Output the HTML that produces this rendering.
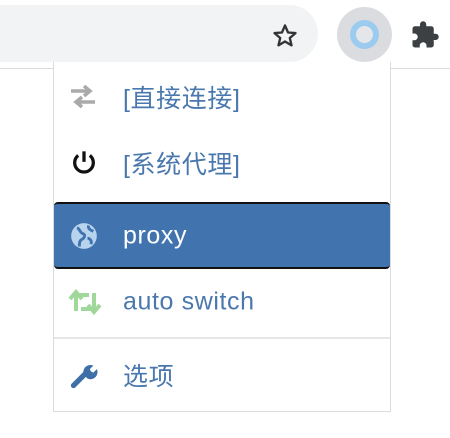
<!DOCTYPE html>
<html><head><meta charset="utf-8"><style>
body{margin:0;width:450px;height:438px;background:#fff;position:relative;overflow:hidden;font-family:"Liberation Sans","Noto Sans CJK SC",sans-serif}
.bar{position:absolute;left:-30px;top:5px;width:348px;height:57px;background:#f1f3f4;border-radius:29px}
.line{position:absolute;left:0;top:68px;width:450px;height:1px;background:#dadce0}
.ext{position:absolute;left:337px;top:7px;width:55px;height:55px;border-radius:50%;background:#dadce0}
.ring{position:absolute;left:350px;top:20px;width:17px;height:17px;border:6px solid #9ccbf0;border-radius:50%;background:#e4e6e9}
.pop{position:absolute;left:53px;top:62px;width:336px;height:349px;border:1px solid #dadce0;background:#fff;border-top:none}
.it{position:absolute;left:0;width:336px;height:66px;color:#4a78ae;font-size:25px;letter-spacing:0.6px}
.it span{position:absolute;left:69px;top:50%;transform:translateY(-50%)}
.ic{position:absolute;left:14px;top:50%;transform:translateY(-50%)}
.sel{background:#4174ae;color:#fff;border-top:2px solid #111;border-bottom:2px solid #111;border-radius:4px}
.sep{position:absolute;left:0;width:336px;height:2px;background:#e6e6e6}
</style></head><body>
<div class="bar"></div>
<div class="line"></div>
<svg style="position:absolute;left:271px;top:22px" width="28" height="28" viewBox="0 0 24 24"><path d="M12 3l2.6 6 6.4.5-4.9 4.2 1.5 6.3L12 16.7 6.4 20l1.5-6.3L3 9.5l6.4-.5z" fill="none" stroke="#333" stroke-width="2" stroke-linejoin="round"/></svg>
<div class="ext"></div><div class="ring"></div>
<svg style="position:absolute;left:410px;top:20px" width="30" height="30" viewBox="0 0 24 24"><path d="M20.5 11H19V7a2 2 0 0 0-2-2h-4V3.5a2.5 2.5 0 0 0-5 0V5H4a2 2 0 0 0-2 2v3.8h1.5a2.7 2.7 0 0 1 0 5.4H2V20a2 2 0 0 0 2 2h3.8v-1.5a2.7 2.7 0 0 1 5.4 0V22H17a2 2 0 0 0 2-2v-4h1.5a2.5 2.5 0 0 0 0-5z" fill="#3c4043"/></svg>
<div class="pop">
<div class="it" style="top:2px"><svg class="ic" width="30" height="24" viewBox="0 0 30 24"><path d="M3 6h18M16 1l6 5-6 5M27 17H9M14 12l-6 5 6 5" stroke="#aaa" stroke-width="3.5" fill="none"/></svg><span>[直接连接]</span></div>
<div class="it" style="top:68px"><svg class="ic" style="left:16px" width="28" height="28" viewBox="0 0 24 24"><path d="M7 5.5a8 8 0 1 0 10 0" stroke="#111" stroke-width="2.8" fill="none"/><path d="M12 2v9" stroke="#111" stroke-width="2.8"/></svg><span>[系统代理]</span></div>
<div class="it sel" style="top:140px;height:63px"><svg class="ic" style="left:16px" width="28" height="28" viewBox="0 0 24 24"><circle cx="12" cy="12" r="11" fill="#b7d3ee"/><path d="M6 5c3 1 2 4 5 5s1 4-1 5-2 4-2 6M16 3c-1 3 2 4 4 5M15 14c2 0 4 2 3 5" stroke="#4174ae" stroke-width="2.5" fill="none"/></svg><span>proxy</span></div>
<div class="it" style="top:207px"><svg class="ic" width="34" height="26" viewBox="0 0 34 26"><path d="M8 22V6h13M2 10l6-7 6 7M26 4v16H13M20 16l6 7 6-7" stroke="#9fd89a" stroke-width="4" fill="none"/></svg><span>auto switch</span></div>
<div class="sep" style="top:275px"></div>
<div class="it" style="top:280px"><svg class="ic" style="left:16px" width="28" height="28" viewBox="0 0 24 24"><path d="M3 21l10-10" stroke="#3e6fa6" stroke-width="4.5" stroke-linecap="round"/><path d="M12 12a6 6 0 0 1 8-8l-3 3 1 2 2 1 3-3a6 6 0 0 1-8 8z" fill="#3e6fa6"/></svg><span>选项</span></div>
</div>
</body></html>
